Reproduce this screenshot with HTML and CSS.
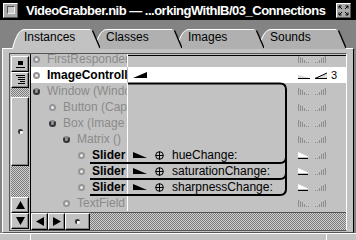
FILE: index.html
```html
<!DOCTYPE html>
<html lang="en">
<head>
  <meta charset="UTF-8">
  <link rel="stylesheet" href="styles.css">
</head>
<body>

<div class="window">
  <div class="titlebar">
    <span class="tb-btn"><span class="mini-inner"></span></span>
    <span class="title">VideoGrabber.nib — ...orkingWithIB/03_Connections</span>
    <span class="tb-btn">
      <svg width="11" height="11" viewBox="0 0 11 11"><path d="M1 1L4 4M1 1h2.5M1 1v2.5M10 1L7 4M10 1H7.5M10 1v2.5M1 10L4 7M1 10h2.5M1 10V7.5M10 10L7 7M10 10H7.5M10 10V7.5" stroke="#000" fill="none"/></svg>
    </span>
  </div>

  <div class="tabbar">
    <div class="tab active">
      <svg class="tab-shape" viewBox="0 0 88 20"><path d="M0 20C2 12 5 4 8 2Q10 0 13 0H78Q80 0 81 2L88 20Z" fill="#c2c2c2"/><path d="M0.5 20C2.5 12 5.5 4.5 8.5 2.5Q10 0.5 13 0.5H78" stroke="#fff" fill="none"/><path d="M80.5 1.5L88 19" stroke="#000" stroke-width="1.4" fill="none"/></svg>
      <span class="tab-label">Instances</span>
    </div>
    <div class="tab">
      <svg class="tab-shape" viewBox="0 0 88 20"><path d="M0 20C2 12 5 4 8 2Q10 0 13 0H78Q80 0 81 2L88 20Z" fill="#b0b0b0"/><path d="M0.5 20C2.5 12 5.5 4.5 8.5 2.5Q10 0.5 13 0.5H78" stroke="#fff" fill="none"/><path d="M80.5 1.5L88 19" stroke="#000" stroke-width="1.4" fill="none"/></svg>
      <span class="tab-label">Classes</span>
    </div>
    <div class="tab">
      <svg class="tab-shape" viewBox="0 0 88 20"><path d="M0 20C2 12 5 4 8 2Q10 0 13 0H78Q80 0 81 2L88 20Z" fill="#b0b0b0"/><path d="M0.5 20C2.5 12 5.5 4.5 8.5 2.5Q10 0.5 13 0.5H78" stroke="#fff" fill="none"/><path d="M80.5 1.5L88 19" stroke="#000" stroke-width="1.4" fill="none"/></svg>
      <span class="tab-label">Images</span>
    </div>
    <div class="tab">
      <svg class="tab-shape" viewBox="0 0 88 20"><path d="M0 20C2 12 5 4 8 2Q10 0 13 0H78Q80 0 81 2L88 20Z" fill="#b0b0b0"/><path d="M0.5 20C2.5 12 5.5 4.5 8.5 2.5Q10 0.5 13 0.5H78" stroke="#fff" fill="none"/><path d="M80.5 1.5L88 19" stroke="#000" stroke-width="1.4" fill="none"/></svg>
      <span class="tab-label">Sounds</span>
    </div>
  </div>

  <div class="panel">
    <div class="browser">
      <div class="vscroll">
        <div class="bevel">
          <svg width="10" height="9" viewBox="0 0 10 9"><rect x="3" y="1" width="5" height="4" fill="#000"/><path d="M1 7.5H10" stroke="#000"/></svg>
        </div>
        <div class="bevel">
          <svg width="10" height="10" viewBox="0 0 10 10"><path d="M1 0.5H10M3 2.5H10M3 4.5H10M5 6.5H10M3 8.5H10" stroke="#000"/></svg>
        </div>
        <div class="trough top"></div>
        <div class="bevel knob"><span class="dimple"></span></div>
        <div class="trough"></div>
        <div class="bevel">
          <svg width="9" height="8" viewBox="0 0 9 8"><path d="M4.5 0L9 8H0Z" fill="#000"/></svg>
        </div>
        <div class="bevel">
          <svg width="9" height="8" viewBox="0 0 9 8"><path d="M0 0H9L4.5 8Z" fill="#000"/></svg>
        </div>
      </div>

      <div class="main">
        <div class="outline">
          <div class="rows">
            <div class="row">
              <div class="name l0"><i class="dot"></i><span>FirstResponder</span></div>
              <div class="mid"></div>
              <div class="ind"><svg width="30" height="8" viewBox="0 0 30 8"><path d="M0.5 1v7M2.5 2v6M4.5 3v5M6.5 5v3M8.5 7v1M10.5 7v1M17.5 7v1M19.5 7v1M21.5 5v3M23.5 3v5M25.5 2v6M27.5 1v7" stroke="#8c8c8c"/></svg></div>
            </div>
            <div class="row selected">
              <div class="name l0"><i class="dot"></i><b>ImageController</b></div>
              <div class="mid"><svg width="14" height="6" viewBox="0 0 14 6"><path d="M0 6L14 0V6Z" fill="#000"/></svg></div>
              <div class="ind"><svg width="30" height="8" viewBox="0 0 30 8"><path d="M0 4L12 7H0Z" fill="#d8d8d8"/><path d="M0 7.5H12" stroke="#000"/><path d="M17 7L29 2V7Z" fill="#ddd"/><path d="M17 7.5L29 2M17 7.5H29" stroke="#000"/></svg><span class="count">3</span></div>
            </div>
            <div class="row">
              <div class="name l0"><i class="dot open"></i><span>Window (Window)</span></div>
              <div class="mid"></div>
              <div class="ind"><svg width="30" height="8" viewBox="0 0 30 8"><path d="M0.5 1v7M2.5 2v6M4.5 3v5M6.5 5v3M8.5 7v1M10.5 7v1M17.5 7v1M19.5 7v1M21.5 5v3M23.5 3v5M25.5 2v6M27.5 1v7" stroke="#8c8c8c"/></svg></div>
            </div>
            <div class="row">
              <div class="name l1"><i class="dot"></i><span>Button (Capture)</span></div>
              <div class="mid"></div>
              <div class="ind"><svg width="30" height="8" viewBox="0 0 30 8"><path d="M0.5 1v7M2.5 2v6M4.5 3v5M6.5 5v3M8.5 7v1M10.5 7v1M17.5 7v1M19.5 7v1M21.5 5v3M23.5 3v5M25.5 2v6M27.5 1v7" stroke="#8c8c8c"/></svg></div>
            </div>
            <div class="row">
              <div class="name l1"><i class="dot open"></i><span>Box (Image Adjust)</span></div>
              <div class="mid"></div>
              <div class="ind"><svg width="30" height="8" viewBox="0 0 30 8"><path d="M0.5 1v7M2.5 2v6M4.5 3v5M6.5 5v3M8.5 7v1M10.5 7v1M17.5 7v1M19.5 7v1M21.5 5v3M23.5 3v5M25.5 2v6M27.5 1v7" stroke="#8c8c8c"/></svg></div>
            </div>
            <div class="row">
              <div class="name l2"><i class="dot open"></i><span>Matrix ()</span></div>
              <div class="mid"></div>
              <div class="ind"><svg width="30" height="8" viewBox="0 0 30 8"><path d="M0.5 1v7M2.5 2v6M4.5 3v5M6.5 5v3M8.5 7v1M10.5 7v1M17.5 7v1M19.5 7v1M21.5 5v3M23.5 3v5M25.5 2v6M27.5 1v7" stroke="#8c8c8c"/></svg></div>
            </div>
            <div class="row">
              <div class="name l3"><i class="dot"></i><b>Slider</b></div>
              <div class="mid"><svg width="14" height="6" viewBox="0 0 14 6"><path d="M0 0V6H14Z" fill="#000"/></svg><svg class="plus" width="9" height="9" viewBox="0 0 9 9"><circle cx="4.5" cy="4.5" r="3.8" stroke="#000" fill="none"/><path d="M4.5 0.5v8M0.5 4.5h8" stroke="#000"/></svg><span class="action">hueChange:</span></div>
              <div class="ind"><svg width="30" height="8" viewBox="0 0 30 8"><path d="M0 1L11 6H0Z" fill="#fff"/><path d="M0 7.5H10" stroke="#000"/><path d="M17.5 7v1M19.5 7v1M21.5 5v3M23.5 3v5M25.5 2v6M27.5 1v7" stroke="#8c8c8c"/></svg></div>
            </div>
            <div class="row">
              <div class="name l3"><i class="dot"></i><b>Slider</b></div>
              <div class="mid"><svg width="14" height="6" viewBox="0 0 14 6"><path d="M0 0V6H14Z" fill="#000"/></svg><svg class="plus" width="9" height="9" viewBox="0 0 9 9"><circle cx="4.5" cy="4.5" r="3.8" stroke="#000" fill="none"/><path d="M4.5 0.5v8M0.5 4.5h8" stroke="#000"/></svg><span class="action">saturationChange:</span></div>
              <div class="ind"><svg width="30" height="8" viewBox="0 0 30 8"><path d="M0 1L11 6H0Z" fill="#fff"/><path d="M0 7.5H10" stroke="#000"/><path d="M17.5 7v1M19.5 7v1M21.5 5v3M23.5 3v5M25.5 2v6M27.5 1v7" stroke="#8c8c8c"/></svg></div>
            </div>
            <div class="row">
              <div class="name l3"><i class="dot"></i><b>Slider</b></div>
              <div class="mid"><svg width="14" height="6" viewBox="0 0 14 6"><path d="M0 0V6H14Z" fill="#000"/></svg><svg class="plus" width="9" height="9" viewBox="0 0 9 9"><circle cx="4.5" cy="4.5" r="3.8" stroke="#000" fill="none"/><path d="M4.5 0.5v8M0.5 4.5h8" stroke="#000"/></svg><span class="action">sharpnessChange:</span></div>
              <div class="ind"><svg width="30" height="8" viewBox="0 0 30 8"><path d="M0 1L11 6H0Z" fill="#fff"/><path d="M0 7.5H10" stroke="#000"/><path d="M17.5 7v1M19.5 7v1M21.5 5v3M23.5 3v5M25.5 2v6M27.5 1v7" stroke="#8c8c8c"/></svg></div>
            </div>
            <div class="row">
              <div class="name l2"><i class="dot"></i><span>TextField</span></div>
              <div class="mid"></div>
              <div class="ind"><svg width="30" height="8" viewBox="0 0 30 8"><path d="M0.5 1v7M2.5 2v6M4.5 3v5M6.5 5v3M8.5 7v1M10.5 7v1M17.5 7v1M19.5 7v1M21.5 5v3M23.5 3v5M25.5 2v6M27.5 1v7" stroke="#8c8c8c"/></svg></div>
            </div>
          </div>

          <!-- connection lines drawn over the outline -->
          <svg class="links" width="315" height="158" viewBox="0 0 315 158">
            <path d="M97 1.5H315" stroke="#000" fill="none"/>
            <path d="M97 29.5H249Q255 29.5 255 35.5V135Q255 141 249 141H59" stroke="#000" stroke-width="2" fill="none"/>
            <path d="M59 109H249Q255 109 255 103" stroke="#000" stroke-width="2" fill="none"/>
            <path d="M59 125H249Q255 125 255 119" stroke="#000" stroke-width="2" fill="none"/>
          </svg>
        </div>

        <div class="hscroll">
          <div class="bevel arrow">
            <svg width="8" height="9" viewBox="0 0 8 9"><path d="M0 4.5L8 0V9Z" fill="#000"/></svg>
          </div>
          <div class="bevel arrow">
            <svg width="8" height="9" viewBox="0 0 8 9"><path d="M8 4.5L0 0V9Z" fill="#000"/></svg>
          </div>
          <div class="bevel hknob"><span class="dimple"></span></div>
          <div class="trough"></div>
        </div>
      </div>
    </div>
  </div>

  <div class="resizebar">
    <span class="grip left"></span>
    <span class="grip mid"></span>
    <span class="grip right"></span>
  </div>
</div>

</body>
</html>
```

FILE: styles.css
```css
body {
  margin: 0;
  background-color: #838383;
  font-family: "Liberation Sans", Arial, sans-serif;
}

.window {
  width: 356px;
  height: 240px;
  display: flex;
  flex-direction: column;
  background-color: #838383;
  overflow: hidden;
}

/* title bar */

.titlebar {
  height: 20px;
  flex: none;
  display: flex;
  align-items: center;
  padding: 0 5px 0 3px;
  background-color: #000;
}

.tb-btn {
  width: 15px;
  height: 15px;
  box-sizing: border-box;
  display: flex;
  align-items: center;
  justify-content: center;
  background-color: #aaa;
  border-top: 1px solid #fff;
  border-left: 1px solid #fff;
  border-right: 1px solid #555;
  border-bottom: 1px solid #555;
}

.mini-inner {
  width: 8px;
  height: 8px;
  box-sizing: border-box;
  background-color: #c8c8c8;
  border-top: 1px solid #555;
  border-left: 1px solid #555;
  border-right: 1px solid #eee;
  border-bottom: 1px solid #eee;
}

.title {
  flex: 1;
  margin-left: 8px;
  color: #fff;
  font-size: 13px;
  font-weight: bold;
  letter-spacing: -0.5px;
  white-space: nowrap;
}

/* tabs */

.tabbar {
  height: 28px;
  flex: none;
  display: flex;
  align-items: flex-end;
  padding-left: 12px;
  position: relative;
  z-index: 1;
}

.tab {
  width: 88px;
  height: 19px;
  margin-right: -6px;
  position: relative;
  display: flex;
  align-items: center;
  padding: 0 0 3px 12px;
  box-sizing: border-box;
  font-size: 12px;
  color: #000;
}

.tab:nth-child(2) { z-index: 3; }
.tab:nth-child(3) { z-index: 2; }
.tab:nth-child(4) { z-index: 1; }

.tab.active {
  height: 20px;
  margin-bottom: -1px;
  padding-bottom: 4px;
  z-index: 4;
}

.tab-shape {
  position: absolute;
  left: 0;
  top: 0;
  width: 88px;
  height: 20px;
}

.tab-label {
  position: relative;
}

/* tab content */

.panel {
  flex: 1;
  margin: 0 2px 0 2px;
  padding: 4px 6px 1px 6px;
  background-color: #c2c2c2;
  border-top: 1px solid #fff;
  border-left: 1px solid #fff;
  border-right: 1px solid #000;
  border-bottom: 1px solid #555;
}

.browser {
  height: 178px;
  box-sizing: border-box;
  display: flex;
  border-top: 1px solid #555;
  border-left: 1px solid #555;
  border-right: 1px solid #fff;
  border-bottom: 1px solid #555;
}

.bevel {
  box-sizing: border-box;
  display: flex;
  align-items: center;
  justify-content: center;
  background-color: #c2c2c2;
  border-top: 1px solid #fff;
  border-left: 1px solid #fff;
  border-right: 1px solid #000;
  border-bottom: 1px solid #000;
  box-shadow: inset -1px -1px #838383;
}

.trough {
  background: repeating-conic-gradient(#7a7a7a 0 25%, #d0d0d0 0 50%) 0 0 / 2px 2px;
}

.dimple {
  width: 5px;
  height: 5px;
  box-sizing: border-box;
  border-radius: 50%;
  background-color: #fff;
  border-top: 2px solid #333;
  border-left: 2px solid #333;
}

.vscroll {
  width: 21px;
  flex: none;
  box-sizing: border-box;
  display: flex;
  flex-direction: column;
  padding: 2px 1px 1px 1px;
  border-right: 1px solid #000;
}

.vscroll .bevel {
  height: 16px;
}

.vscroll .trough {
  height: 31px;
}

.vscroll .trough.top {
  height: 9px;
}

.vscroll .knob {
  height: 69px;
}

.main {
  flex: 1;
  display: flex;
  flex-direction: column;
}

/* outline of objects */

.outline {
  height: 158px;
  flex: none;
  position: relative;
  overflow: hidden;
  border-bottom: 1px solid #555;
}

.rows {
  margin-top: -3px;
}

.row {
  height: 16px;
  display: flex;
  align-items: center;
  font-size: 12px;
}

.row.selected {
  background-color: #fff;
}

.name {
  width: 97px;
  height: 16px;
  flex: none;
  box-sizing: border-box;
  display: flex;
  align-items: center;
  gap: 7px;
  overflow: hidden;
  white-space: nowrap;
  color: #8a8a8a;
  border-right: 1px solid #fff;
}

.row.selected .name {
  border-right-color: #bdbdbd;
}

.name b {
  color: #000;
}

.l0 { padding-left: 2px; }
.l1 { padding-left: 18px; }
.l2 { padding-left: 32px; }
.l3 { padding-left: 47px; }

.dot {
  width: 7px;
  height: 7px;
  flex: none;
  box-sizing: border-box;
  border-radius: 50%;
  background-color: #eee;
  border: 2px solid #959595;
}

.dot.open {
  background-color: #9a9a9a;
  border-color: #333;
  border-top-color: #888;
}

.mid {
  width: 170px;
  flex: none;
  display: flex;
  align-items: center;
  padding-left: 5px;
  box-sizing: border-box;
}

.plus {
  margin-left: 8px;
}

.action {
  margin-left: 8px;
  color: #000;
}

.ind {
  flex: 1;
  display: flex;
  align-items: center;
}

.count {
  margin-left: 3px;
  font-size: 11px;
  color: #000;
}

.links {
  position: absolute;
  left: 0;
  top: 0;
}

/* horizontal scroller */

.hscroll {
  height: 17px;
  flex: none;
  display: flex;
}

.hscroll .arrow {
  width: 17px;
}

.hscroll .hknob {
  width: 25px;
}

.hscroll .trough {
  flex: 1;
}

/* resize bar */

.resizebar {
  height: 8px;
  flex: none;
  display: flex;
  background-color: #c2c2c2;
  border-top: 1px solid #fff;
  box-sizing: border-box;
}

.grip.left {
  width: 30px;
  border-right: 1px solid #fff;
}

.grip.mid {
  flex: 1;
  border-right: 1px solid #fff;
}

.grip.right {
  width: 29px;
}
```
